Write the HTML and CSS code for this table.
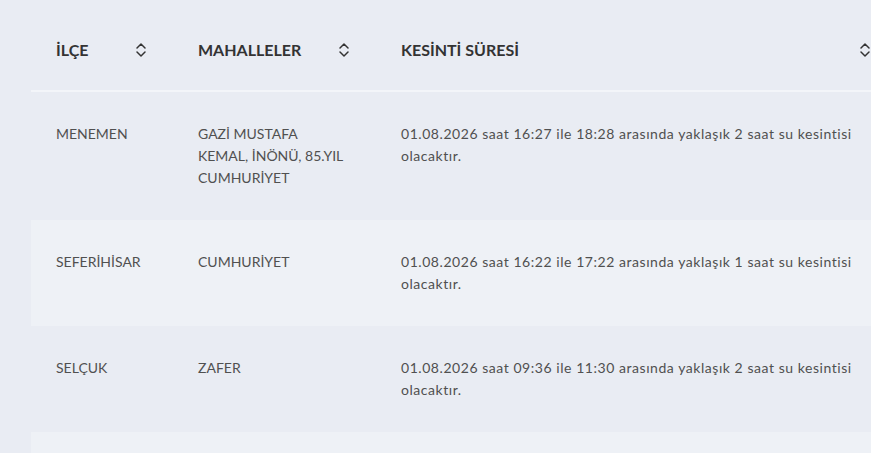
FILE: index.html
```html
<!DOCTYPE html>
<html lang="tr">
<head>
<meta charset="utf-8">
<link rel="stylesheet" href="styles.css">
</head>
<body>
<div class="wrap">
<table class="outages">
  <colgroup>
    <col class="c1"><col class="c2"><col class="c3">
  </colgroup>
  <thead>
    <tr>
      <th><div class="th-in"><span>İLÇE</span><svg class="sort" viewBox="0 0 12 18" width="12" height="18"><path d="M2 7 L6 3 L10 7 M2 11 L6 15 L10 11" fill="none" stroke="#333" stroke-width="1.5" stroke-linecap="round" stroke-linejoin="round"/></svg></div></th>
      <th><div class="th-in"><span>MAHALLELER</span><svg class="sort" viewBox="0 0 12 18" width="12" height="18"><path d="M2 7 L6 3 L10 7 M2 11 L6 15 L10 11" fill="none" stroke="#333" stroke-width="1.5" stroke-linecap="round" stroke-linejoin="round"/></svg></div></th>
      <th><div class="th-in"><span>KESİNTİ SÜRESİ</span><svg class="sort" viewBox="0 0 12 18" width="12" height="18"><path d="M2 7 L6 3 L10 7 M2 11 L6 15 L10 11" fill="none" stroke="#333" stroke-width="1.5" stroke-linecap="round" stroke-linejoin="round"/></svg></div></th>
    </tr>
  </thead>
  <tbody>
    <tr>
      <td>MENEMEN</td>
      <td>GAZİ MUSTAFA KEMAL, İNÖNÜ, 85.YIL CUMHURİYET</td>
      <td class="desc">01.08.2026 saat 16:27 ile 18:28 arasında yaklaşık 2 saat su kesintisi olacaktır.</td>
    </tr>
    <tr>
      <td>SEFERİHİSAR</td>
      <td>CUMHURİYET</td>
      <td class="desc">01.08.2026 saat 16:22 ile 17:22 arasında yaklaşık 1 saat su kesintisi olacaktır.</td>
    </tr>
    <tr>
      <td>SELÇUK</td>
      <td>ZAFER</td>
      <td class="desc">01.08.2026 saat 09:36 ile 11:30 arasında yaklaşık 2 saat su kesintisi olacaktır.</td>
    </tr>
    <tr>
      <td>&nbsp;</td>
      <td>&nbsp;</td>
      <td class="desc">&nbsp;</td>
    </tr>
  </tbody>
</table>
</div>
</body>
</html>
```

FILE: styles.css
```css
html, body {
  margin: 0;
  padding: 0;
  background: #e9ecf3;
  overflow: hidden;
}
body {
  font-family: "Lato", "Noto Sans", sans-serif;
  color: #4d4d4d;
  width: 871px;
  height: 453px;
}
.wrap {
  padding-left: 31px;
  width: 900px;
}
.outages {
  border-collapse: collapse;
  width: 866px;
  table-layout: fixed;
}
.c1 { width: 142px; }
.c2 { width: 203px; }
.c3 { width: 521px; }
.outages th,
.outages td {
  box-sizing: border-box;
}
.outages th {
  padding: 39px 26px 29px 25px;
  text-align: left;
  font-weight: 700;
  font-size: 16px;
  line-height: 22px;
  color: #333;
  border-bottom: 2px solid #f3f5f9;
}
.th-in {
  display: flex;
  justify-content: space-between;
  align-items: center;
}
.sort {
  display: block;
}
.outages td {
  padding: 31px 25px 31px 25px;
  vertical-align: top;
  font-size: 14px;
  line-height: 22px;
  color: #505050;
}
.outages td.desc {
  letter-spacing: 0.55px;
}
.outages tbody tr:nth-child(even) td {
  background: #eef1f6;
}
```
